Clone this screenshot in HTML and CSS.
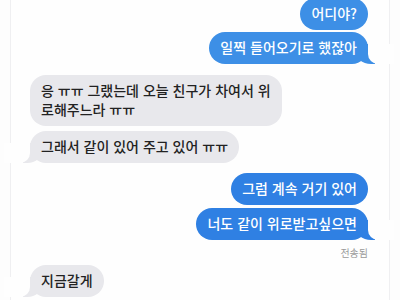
FILE: index.html
```html
<!DOCTYPE html>
<html lang="ko">
<head>
    <meta charset="UTF-8">
    <meta name="viewport" content="width=device-width, initial-scale=1.0">
    <title>메시지</title>
    <link rel="stylesheet" href="styles.css">
</head>
<body>
    <div class="thread">
        <div class="bubble sent first">어디야?</div>
        <div class="bubble sent close tail">일찍 들어오기로 했잖아</div>

        <div class="bubble received group">응 ㅠㅠ 그랬는데 오늘 친구가 차여서 위<br>로해주느라 ㅠㅠ</div>
        <div class="bubble received near tail">그래서 같이 있어 주고 있어 ㅠㅠ</div>

        <div class="bubble sent dark group">그럼 계속 거기 있어</div>
        <div class="bubble sent dark close tail">너도 같이 위로받고싶으면</div>
        <div class="status">전송됨</div>

        <div class="bubble received after-status tail">지금갈게</div>
    </div>
</body>
</html>
```

FILE: styles.css
```css
body {
    margin: 0;
    padding: 0;
    background-color: #fdfdfd;
    font-family: "Noto Sans CJK KR", "Noto Sans", sans-serif;
    overflow: hidden;
}
.thread {
    position: relative;
    z-index: 0;
    width: 380px;
    height: 300px;
    margin-left: 10px;
    border-left: 1px solid #efeff1;
    border-right: 1px solid #efeff1;
    background: #fefefe;
    display: flex;
    flex-direction: column;
    padding: 0 21px 0 19px;
    box-sizing: border-box;
}
.bubble {
    position: relative;
    font-size: 14px;
    font-weight: 500;
    line-height: 19px;
    padding: 6px 11px 7px;
    border-radius: 16px;
    white-space: nowrap;
}
.sent {
    align-self: flex-end;
    background-color: #3d8fe6;
    color: #fff;
}
.sent.dark {
    background-color: #2f80e3;
}
.received {
    align-self: flex-start;
    background-color: #e8e8ec;
    color: #222;
}
.first {
    margin-top: -2px;
}
.close {
    margin-top: 2px;
}
.dark.close {
    margin-top: 3px;
}
.near {
    margin-top: 5px;
}
.group {
    margin-top: 11px;
}
.dark.group {
    margin-top: 10px;
}
.after-status {
    margin-top: 6px;
}
.status {
    align-self: flex-end;
    font-size: 10px;
    line-height: 13px;
    color: #9a9a9a;
    margin-top: 6px;
}

/* tails, drawn behind the bubble */
.tail::before,
.tail::after {
    content: "";
    position: absolute;
    z-index: -1;
    bottom: 0;
    height: 20px;
}
.sent.tail::before {
    right: -7px;
    width: 20px;
    background: inherit;
    border-bottom-left-radius: 16px 14px;
}
.sent.tail::after {
    right: -26px;
    width: 26px;
    background: #fefefe;
    border-bottom-left-radius: 10px;
}
.received.tail::before {
    left: -7px;
    width: 20px;
    background: inherit;
    border-bottom-right-radius: 16px 14px;
}
.received.tail::after {
    left: -26px;
    width: 26px;
    background: #fefefe;
    border-bottom-right-radius: 10px;
}
```
